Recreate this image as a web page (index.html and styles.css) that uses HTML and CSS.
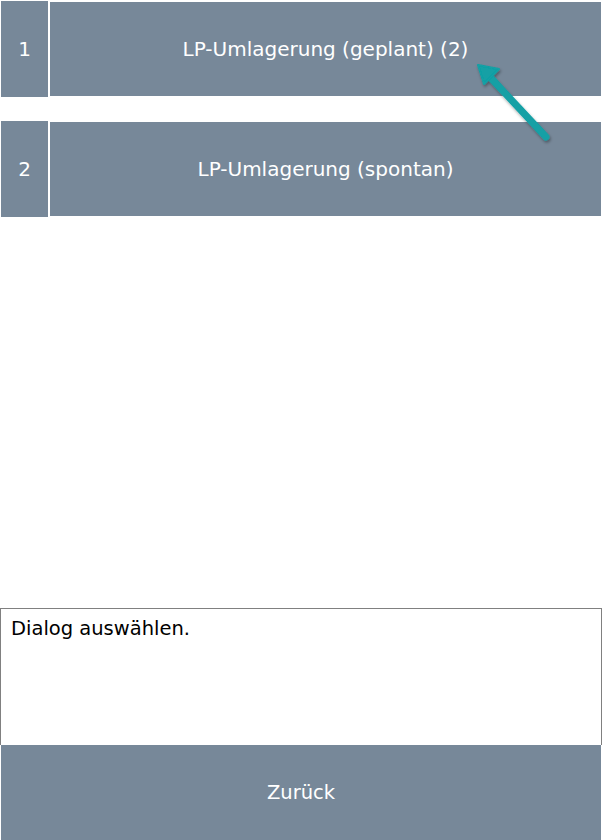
FILE: index.html
```html
<!DOCTYPE html>
<html lang="de">
<head>
<meta charset="UTF-8">
<meta name="viewport" content="width=device-width, initial-scale=1.0">
<title>Dialogauswahl</title>
<link rel="stylesheet" href="styles.css">
</head>
<body>

<div class="screen">
  <div class="menu">
    <div class="menu-row">
      <div class="menu-key">1</div>
      <button class="menu-btn">LP-Umlagerung (geplant) (2)</button>
    </div>
    <div class="menu-row">
      <div class="menu-key">2</div>
      <button class="menu-btn">LP-Umlagerung (spontan)</button>
    </div>
  </div>

  <div class="message">Dialog auswählen.</div>
  <button class="back-btn">Zurück</button>

  <!-- hint arrow pointing at the first entry -->
  <svg class="hint-arrow" width="90" height="95" viewBox="0 0 90 95">
    <defs>
      <filter id="shadow" x="-30%" y="-30%" width="160%" height="160%">
        <feDropShadow dx="1" dy="2" stdDeviation="1.5" flood-color="#000" flood-opacity="0.35"/>
      </filter>
    </defs>
    <g filter="url(#shadow)">
      <line x1="76" y1="82" x2="20" y2="22" stroke="#12a0a5" stroke-width="7" stroke-linecap="round"/>
      <polygon points="8,10 29,14 14,29" fill="#12a0a5" stroke="#12a0a5" stroke-width="2" stroke-linejoin="round"/>
    </g>
  </svg>
</div>

</body>
</html>
```

FILE: styles.css
```css
* {
  box-sizing: border-box;
}

body {
  margin: 0;
  background: #fff;
  font-family: 'DejaVu Sans', sans-serif;
}

.screen {
  position: relative;
  width: 602px;
  height: 840px;
  display: flex;
  flex-direction: column;
}

.menu {
  flex: 1;
  display: flex;
  flex-direction: column;
  gap: 24px;
  padding-top: 1px;
}

.menu-row {
  display: flex;
  gap: 2px;
  height: 96px;
}

.menu-key {
  width: 47px;
  margin-left: 1px;
  background: #778899;
  color: #fff;
  font-size: 20px;
  display: flex;
  align-items: center;
  justify-content: center;
}

.menu-btn {
  flex: 1;
  margin: 1px 1px 1px 0;
  border: none;
  background: #778899;
  color: #fff;
  font-family: inherit;
  font-size: 20px;
  cursor: pointer;
}

.message {
  height: 137px;
  border: 1px solid #808080;
  border-bottom: none;
  padding: 8px 10px;
  font-size: 19.5px;
  color: #000;
}

.back-btn {
  height: 95px;
  margin: 0 1px 0 1px;
  border: none;
  background: #778899;
  color: #fff;
  font-family: inherit;
  font-size: 19.5px;
  cursor: pointer;
}

.hint-arrow {
  position: absolute;
  left: 470px;
  top: 55px;
}
```
